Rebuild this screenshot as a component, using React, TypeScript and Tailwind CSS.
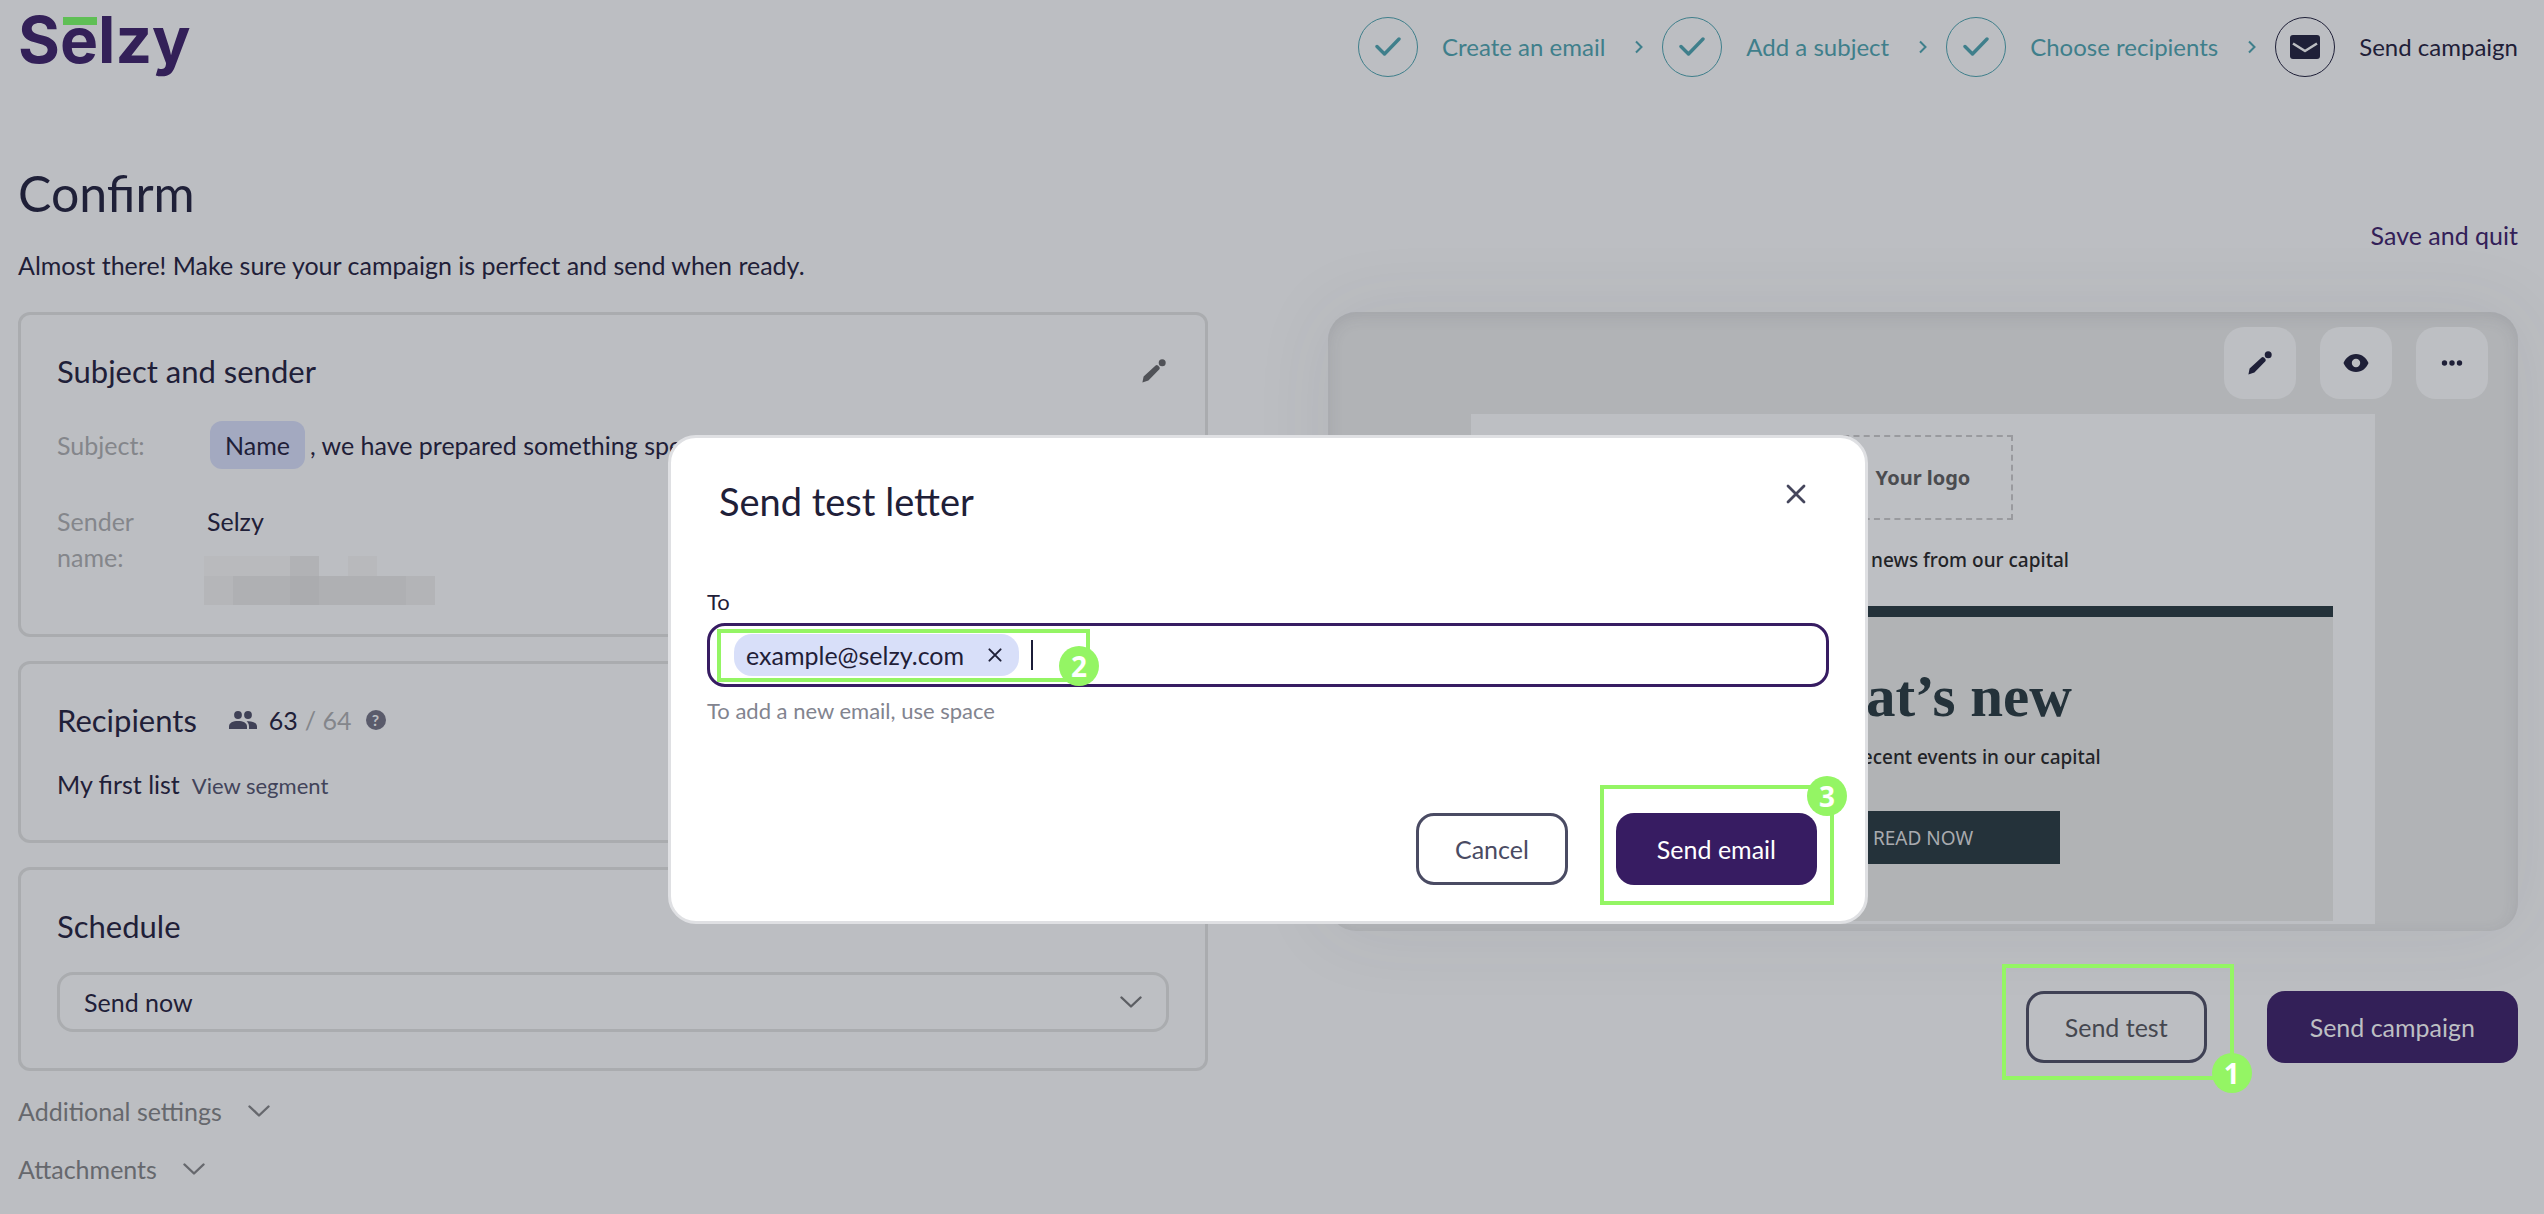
import React, { useState } from 'react'
import { clsx } from 'clsx'

const STEPS = [
  { name: 'Create an email', done: true },
  { name: 'Add a subject', done: true },
  { name: 'Choose recipients', done: true },
  { name: 'Send campaign', done: false }
]

const PencilIcon = ({ className }: { className?: string }) => (
  <svg viewBox="0 0 24 24" fill="currentColor" className={clsx('h-6 w-6', className)} aria-hidden="true">
    <path d="M0.4 23.6L1.6 17.6L13.6 6.4Q14.8 5.4 16 6.6L17.2 7.8Q18.4 9 17.4 10.2L6.4 21.4Z" />
    <circle cx="20.2" cy="3.7" r="3.5" />
  </svg>
)

const EyeIcon = () => (
  <svg viewBox="0 0 26 20" fill="currentColor" className="h-5 w-[26px]" aria-hidden="true">
    <path
      fillRule="evenodd"
      d="M13 1C7 1 2.5 5 0.5 10C2.5 15 7 19 13 19S23.5 15 25.5 10C23.5 5 19 1 13 1ZM13 5.8A4.2 4.2 0 1 1 13 14.2A4.2 4.2 0 1 1 13 5.8Z"
    />
  </svg>
)

const DotsIcon = () => (
  <svg viewBox="0 0 22 6" fill="currentColor" className="h-[6px] w-[22px]" aria-hidden="true">
    <circle cx="3.5" cy="3" r="2.7" />
    <circle cx="11" cy="3" r="2.7" />
    <circle cx="18.5" cy="3" r="2.7" />
  </svg>
)

const CheckIcon = () => (
  <svg viewBox="0 0 26 20" fill="none" stroke="currentColor" strokeWidth="3.4" className="h-5 w-[26px]" aria-hidden="true">
    <path d="M2 9.500L9.500 17L24 2" strokeLinecap="round" strokeLinejoin="round" />
  </svg>
)

const MailIcon = () => (
  <svg viewBox="0 0 30 24" className="h-6 w-[30px]" aria-hidden="true">
    <rect width="30" height="24" rx="3" fill="#1f2038" />
    <path d="M3 8.5L15 16L27 8.5" fill="none" stroke="#bcbec2" strokeWidth="2.6" strokeLinejoin="round" />
  </svg>
)

const ChevronRight = () => (
  <svg viewBox="0 0 8 14" fill="none" stroke="currentColor" strokeWidth="2" className="mr-[19px] ml-[30px] h-[14px] w-2" aria-hidden="true">
    <path d="M1 1.5L6.5 7L1 12.5" />
  </svg>
)

const ChevronDown = ({ className }: { className?: string }) => (
  <svg viewBox="0 0 22 12" fill="none" stroke="currentColor" strokeWidth="2.4" className={clsx('h-3 w-[22px]', className)} aria-hidden="true">
    <path d="M1.5 1.5L11 10.5L20.5 1.5" strokeLinecap="round" strokeLinejoin="round" />
  </svg>
)

const CloseIcon = ({ className }: { className?: string }) => (
  <svg viewBox="0 0 20 20" fill="none" stroke="currentColor" strokeWidth="2.8" className={className} aria-hidden="true">
    <path d="M2 2L18 18M18 2L2 18" strokeLinecap="round" />
  </svg>
)

const PeopleIcon = () => (
  <svg viewBox="0 0 28 18" fill="#3f4156" className="h-[18px] w-7" aria-hidden="true">
    <circle cx="9" cy="4" r="3.9" />
    <circle cx="19" cy="4" r="3.9" />
    <path d="M0 18V15.5C0 11.8 4 10 9 10S18 11.8 18 15.5V18Z" />
    <path d="M20 18V15.5C20 13.2 19 11.6 17.6 10.3C23 9.7 28 11.5 28 15.5V18Z" />
  </svg>
)

// pixelated sender address: x, y, width, height, fill
const MOSAIC: [number, number, number, number, string][] = [
  [0, 0, 86, 20, '#b9babd'],
  [86, 0, 29, 20, '#b1b2b5'],
  [144, 0, 29, 20, '#b8b9bc'],
  [0, 20, 29, 29, '#b5b6b9'],
  [29, 20, 57, 29, '#afb0b3'],
  [86, 20, 29, 29, '#abacaf'],
  [115, 20, 87, 29, '#afb0b3'],
  [202, 20, 29, 29, '#b3b4b7']
]

const Marker = ({ children, className }: { children: React.ReactNode; className?: string }) => (
  <span
    className={clsx(
      "absolute flex h-10 w-10 items-center justify-center rounded-full bg-[#94f564] font-['Noto_Sans',sans-serif] text-[28px] leading-[36px] font-bold text-white",
      className
    )}
  >
    {children}
  </span>
)

const Card = ({ children, className }: { children: React.ReactNode; className?: string }) => (
  <section className={clsx('rounded-xl border-[3px] border-[#aaacaf] px-9 pt-[38px]', className)}>{children}</section>
)

const Header = () => (
  <header className="flex items-start justify-between pt-[17px]">
    <a href="#" className="relative font-[Inter,sans-serif] text-[64px] leading-[46px] font-bold text-[#332058]">
      Selzy
      <span className="absolute top-0 left-[45px] h-2 w-[34px] bg-[#5fbf55]" />
    </a>
    <ol className="flex items-center text-[24px]">
      {STEPS.map((step, index) => (
        <li key={step.name} className={clsx('flex items-center', step.done ? 'text-[#3f7f8b]' : 'text-[#1f2038]')}>
          <span className="mr-6 flex h-[60px] w-[60px] items-center justify-center rounded-full border border-current">
            {step.done ? <CheckIcon /> : <MailIcon />}
          </span>
          {step.name}
          {index < STEPS.length - 1 && <ChevronRight />}
        </li>
      ))}
    </ol>
  </header>
)

const Settings = () => (
  <div>
    <Card className="pb-[29px]">
      <div className="flex items-center justify-between">
        <h2 className="text-[31px] leading-[36px]">Subject and sender</h2>
        <button type="button" aria-label="Edit subject and sender" className="mr-[3px] text-[#505257]">
          <PencilIcon />
        </button>
      </div>
      <dl>
        <div className="mt-8 flex items-center">
          <dt className="w-[150px] text-[#84868b]">Subject:</dt>
          <dd className="flex items-center">
            <span className="mr-[5px] ml-[3px] flex h-12 items-center rounded-xl bg-[#a3a9c0] px-[15px]">Name</span>
            , we have prepared something special
          </dd>
        </div>
        <div className="mt-[34px] flex items-start">
          <dt className="w-[150px] pr-12 text-[#84868b]">Sender name:</dt>
          <dd>
            Selzy
            <svg viewBox="0 0 231 49" className="mt-[17px] -ml-[3px] h-[49px] w-[231px]" aria-hidden="true">
              {MOSAIC.map(([x, y, w, h, fill]) => (
                <rect key={`${x}-${y}`} x={x} y={y} width={w} height={h} fill={fill} />
              ))}
            </svg>
          </dd>
        </div>
      </dl>
    </Card>

    <Card className="mt-6 pb-9">
      <div className="flex items-center">
        <h2 className="mr-8 text-[31px] leading-[36px]">Recipients</h2>
        <PeopleIcon />
        <span className="mr-[7px] ml-3">63</span>
        <span className="mr-[14px] text-[#84868b]">/ 64</span>
        <button
          type="button"
          aria-label="Help"
          className="flex h-5 w-5 items-center justify-center rounded-full bg-[#5a5b6b] text-[16px] leading-[20px] font-bold text-[#bcbec2]"
        >
          ?
        </button>
      </div>
      <p className="mt-7 flex items-baseline">
        My first list
        <a href="#" className="ml-3 text-[22px] text-[#42445a]">View segment</a>
      </p>
    </Card>

    <Card className="mt-6 pb-9">
      <h2 className="text-[31px] leading-[36px]">
        <label htmlFor="schedule">Schedule</label>
      </h2>
      <div className="relative mt-7">
        <select id="schedule" className="block h-[60px] w-full appearance-none rounded-2xl border-[3px] border-[#aaacaf] bg-[#bdbfc3] px-6">
          <option>Send now</option>
        </select>
        <ChevronDown className="pointer-events-none absolute top-6 right-[27px] text-[#5c5e63]" />
      </div>
    </Card>

    <div className="mt-[22px] flex flex-col items-start gap-[22px] text-[#66686d]">
      {['Additional settings', 'Attachments'].map((name) => (
        <button type="button" key={name} className="flex items-center">
          {name}
          <ChevronDown className="ml-[26px]" />
        </button>
      ))}
    </div>
  </div>
)

const Preview = () => (
  <div>
    <div className="rounded-[28px] bg-[#b1b3b6] pb-[7px] shadow-[0_0_80px_rgba(60,60,80,0.08),inset_0_4px_16px_rgba(60,60,70,0.12)]">
      <div className="flex justify-end gap-6 pt-[15px] pr-[30px]">
        {[
          { name: 'Edit', icon: <PencilIcon /> },
          { name: 'Preview', icon: <EyeIcon /> },
          { name: 'More', icon: <DotsIcon /> }
        ].map((item) => (
          <button
            type="button"
            key={item.name}
            aria-label={item.name}
            className="flex h-[72px] w-[72px] items-center justify-center rounded-[20px] bg-[#bdbfc3] text-[#1f2038]"
          >
            {item.icon}
          </button>
        ))}
      </div>
      <div className="mx-[12%] mt-[15px] bg-[#bdbfc3] px-[42px] pt-[21px] pb-[3px] text-center font-['Noto_Sans',sans-serif] text-[19px] leading-[28px] font-medium text-[#222327]">
        <div className="mx-auto flex h-[85px] w-[180px] items-center justify-center border-2 border-dashed border-[#999a9e] text-[20px] font-bold text-[#4b4c50]">
          Your logo
        </div>
        <p className="mt-[26px]">The latest news from our capital</p>
        <div className="mt-8 border-t-[11px] border-[#24323a] bg-[#b1b3b5] pt-[47px] pb-[57px]">
          <h2 className="font-['Liberation_Serif',serif] text-[59px] leading-[64px] font-bold text-[#24323a]">What’s new</h2>
          <p className="mt-[15px]">Read about recent events in our capital</p>
          <a href="#" className="mx-auto mt-10 flex h-[53px] w-[274px] items-center justify-center bg-[#24323a] font-normal text-[#a9abaf]">
            READ NOW
          </a>
        </div>
      </div>
    </div>
    <div className="mt-[60px] flex justify-end gap-[60px]">
      <div className="relative">
        <button type="button" className="h-[72px] rounded-[18px] border-[3px] border-[#3f4154] px-9 text-[#45474f]">Send test</button>
        <span className="pointer-events-none absolute -top-[27px] -right-[27px] -bottom-[17px] -left-6 border-4 border-[#94f564]" />
        <Marker className="-right-[45px] -bottom-[30px]">1</Marker>
      </div>
      <button type="button" className="h-[72px] rounded-[18px] bg-[#332058] px-[43px] text-[#bdbfc3]">Send campaign</button>
    </div>
  </div>
)

const SendTestDialog = () => {
  const [email, setEmail] = useState('')

  return (
    <div className="absolute inset-x-0 top-[435px] flex justify-center pr-2">
      <div
        role="dialog"
        aria-labelledby="dialog-title"
        className="w-[1200px] max-w-full rounded-[28px] border-[3px] border-[#dfe0e3] bg-white px-9 pt-[41px] pb-9"
      >
        <div className="flex items-start justify-between pr-[18px] pl-3">
          <h2 id="dialog-title" className="text-[38px] leading-[44px]">Send test letter</h2>
          <button type="button" aria-label="Close" className="flex h-[30px] w-[30px] items-center justify-center text-[#45465c]">
            <CloseIcon className="h-5 w-5" />
          </button>
        </div>

        <label htmlFor="email" className="mt-[67px] block text-[22px] leading-[24px]">To</label>
        <div className="relative mt-[9px] flex h-16 items-center rounded-[18px] border-[3px] border-[#371c62] pl-6">
          <span className="flex h-[42px] items-center justify-between gap-6 rounded-[18px] bg-[#d8dff9] pr-[17px] pl-3">
            example@selzy.com
            <button type="button" aria-label="Remove example@selzy.com">
              <CloseIcon className="h-[14px] w-[14px]" />
            </button>
          </span>
          <span className="ml-3 h-[30px] w-[2px] bg-[#1b1c38]" />
          <input
            id="email"
            type="text"
            value={email}
            onChange={(e) => setEmail(e.target.value)}
            className="h-full min-w-0 flex-1 bg-transparent outline-none"
          />
          <span className="pointer-events-none absolute top-[3px] left-[7px] h-[53px] w-[373px] border-4 border-[#94f564]" />
          <Marker className="top-5 left-[349px]">2</Marker>
        </div>
        <p className="mt-[10px] text-[22px] leading-[28px] text-[#82848f]">To add a new email, use space</p>

        <div className="mt-[88px] flex justify-end gap-12 pr-3">
          <button type="button" className="h-[72px] rounded-[18px] border-[3px] border-[#4a4b63] px-9 text-[#4a4b63]">Cancel</button>
          <div className="relative">
            <button type="button" className="h-[72px] rounded-[18px] bg-[#371c62] px-[41px] text-white">Send email</button>
            <span className="pointer-events-none absolute -top-7 -right-[17px] -bottom-5 -left-4 border-4 border-[#94f564]" />
            <Marker className="-top-[37px] -right-[30px]">3</Marker>
          </div>
        </div>
      </div>
    </div>
  )
}

const App = () => {
  return (
    <div className="relative min-h-screen bg-[#bcbec2] pr-[26px] pl-[18px] font-[Lato,sans-serif] text-[25px] leading-[36px] text-[#1f2038]">
      <Header />
      <main className="mt-[86px]">
        <div className="flex items-end justify-between">
          <div>
            <h1 className="text-[50px] leading-[60px]">Confirm</h1>
            <p className="mt-6">Almost there! Make sure your campaign is perfect and send when ready.</p>
          </div>
          <a href="#" className="mb-[30px] text-[#332058]">Save and quit</a>
        </div>
        <div className="mt-[29px] grid grid-cols-2 gap-[120px]">
          <Settings />
          <Preview />
        </div>
      </main>
      <SendTestDialog />
    </div>
  )
}

export default App
